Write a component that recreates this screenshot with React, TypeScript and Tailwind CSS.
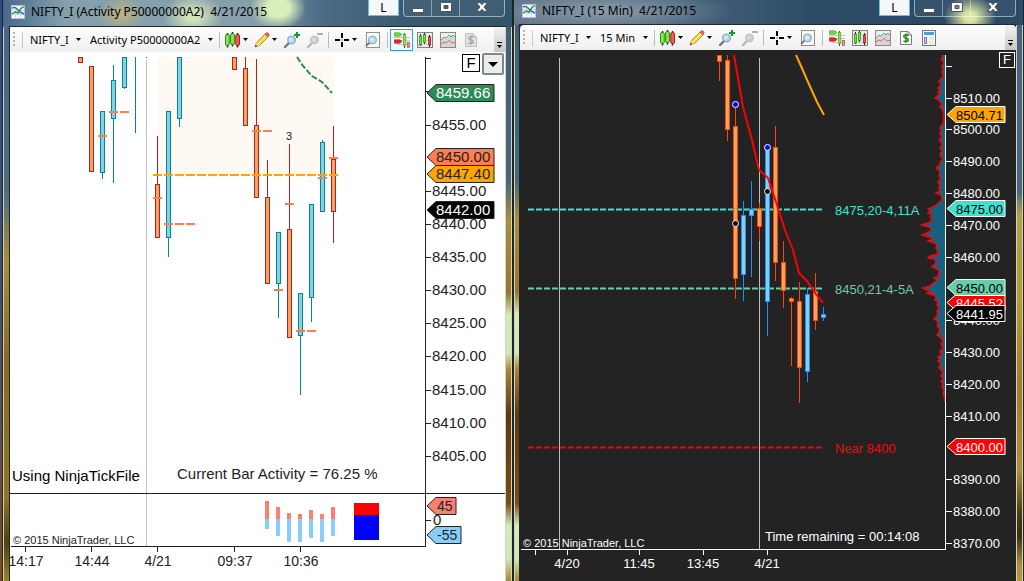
import type { ReactNode } from "react";
import clsx from "clsx";

type Candle = {
  x: number;
  high: number;
  top: number;
  bottom: number;
  low: number;
  up: boolean;
};

type Tag = {
  y: number;
  text: string;
  fill: string;
  color: string;
};

const candle = (x: number, high: number, top: number, bottom: number, low: number, up: boolean): Candle => ({
  x,
  high,
  top,
  bottom,
  low,
  up,
});

const activityCandles: Candle[] = [
  candle(80, 57, 57, 63, 63, false),
  candle(91, 66, 66, 172, 172, false),
  candle(102, 111, 111, 173, 179, true),
  candle(113, 65, 80, 119, 183, true),
  candle(124, 57, 57, 88, 89, true),
  candle(157, 136, 184, 238, 238, false),
  candle(168, 111, 111, 238, 257, true),
  candle(179, 57, 57, 119, 127, true),
  candle(234, 57, 57, 70, 70, false),
  candle(245, 57, 68, 126, 126, false),
  candle(256, 59, 125, 198, 198, false),
  candle(267, 160, 197, 284, 284, false),
  candle(278, 232, 232, 284, 318, true),
  candle(289, 144, 229, 338, 338, false),
  candle(300, 293, 293, 336, 395, true),
  candle(311, 204, 204, 298, 322, true),
  candle(322, 140, 142, 212, 212, true),
  candle(333, 126, 159, 212, 243, false),
];

const minuteCandles: Candle[] = [
  candle(719, 55, 55, 62, 81, false),
  candle(727, 55, 60, 130, 141, false),
  candle(735, 104, 126, 279, 299, false),
  candle(743, 201, 215, 275, 301, true),
  candle(751, 181, 209, 216, 277, true),
  candle(759, 203, 208, 227, 241, false),
  candle(767, 148, 148, 302, 336, true),
  candle(775, 126, 147, 263, 281, false),
  candle(783, 241, 262, 291, 308, false),
  candle(791, 297, 298, 302, 366, false),
  candle(799, 282, 301, 368, 403, false),
  candle(807, 288, 294, 372, 382, true),
  candle(815, 273, 291, 321, 330, false),
  candle(823, 307, 314, 318, 321, true),
];

// Point of control marks, [left, top]
const pocMarks = [
  [98, 135], [109, 111], [120, 111], [153, 197], [164, 223], [175, 223], [186, 223],
  [252, 130], [263, 130], [285, 203], [318, 177], [329, 157], [274, 289], [296, 330], [307, 330],
];

// Buy / sell bars, [left, top, bottom]
const deltaBars = [
  [265, 501, 529], [276, 507, 536], [287, 513, 542], [298, 514, 542],
  [309, 510, 538], [320, 514, 542], [331, 507, 536],
];

// Volume profile outline, [y, left]
const profile = [
  [55, 942], [57, 943], [59, 941], [61, 943], [63, 944], [66, 942], [69, 943], [72, 942], [75, 943],
  [78, 942], [80, 940], [82, 939], [84, 941], [86, 940], [88, 938], [90, 940], [92, 938], [94, 940],
  [96, 937], [98, 935], [100, 939], [102, 940], [104, 942], [107, 940], [109, 942], [112, 943],
  [115, 944], [118, 943], [121, 944], [124, 943], [126, 941], [128, 940], [131, 941], [134, 940],
  [137, 942], [140, 939], [142, 941], [145, 942], [148, 940], [151, 942], [154, 940], [157, 941],
  [159, 943], [161, 941], [164, 940], [167, 938], [168, 936], [170, 939], [173, 940], [176, 939],
  [179, 941], [182, 938], [185, 940], [188, 939], [191, 940], [193, 936], [195, 941], [198, 942],
  [201, 941], [203, 938], [205, 936], [207, 933], [209, 928], [211, 930], [213, 928], [215, 932],
  [217, 930], [219, 932], [221, 931], [223, 928], [225, 922], [227, 929], [229, 931], [231, 930],
  [233, 927], [235, 922], [237, 930], [239, 933], [241, 928], [243, 934], [245, 937], [248, 936],
  [250, 938], [252, 937], [254, 938], [256, 930], [258, 928], [259, 935], [262, 936], [265, 934],
  [267, 932], [269, 937], [272, 940], [274, 938], [276, 939], [278, 934], [280, 937], [282, 935],
  [284, 932], [286, 930], [288, 923], [290, 927], [292, 931], [293, 927], [295, 933], [297, 936],
  [300, 935], [302, 938], [305, 937], [308, 939], [311, 937], [314, 938], [317, 936], [319, 934],
  [321, 937], [324, 938], [326, 937], [329, 940], [332, 939], [335, 937], [338, 941], [341, 943],
  [344, 941], [347, 943], [350, 941], [352, 940], [354, 942], [357, 938], [359, 940], [361, 938],
  [364, 941], [367, 939], [370, 941], [373, 943], [376, 941], [379, 943], [381, 941], [384, 943],
  [387, 942], [390, 944], [393, 943], [396, 944], [402, 945],
];

const profilePath = profile.map(([y, x], i) => `${i === 0 ? "M" : "L"}${x} ${y}`).join("");

function Candles({ data, up, down }: { data: Candle[]; up: string; down: string }) {
  return (
    <g>
      {data.map((c) => (
        <g key={c.x}>
          <rect x={c.x} y={c.high} width={1} height={c.low - c.high} fill={c.up ? up : down} />
          <rect x={c.x - 2} y={c.top} width={5} height={c.bottom - c.top} fill={c.up ? up : down} />
          <rect
            x={c.x - 1}
            y={c.top + 1}
            width={3}
            height={Math.max(c.bottom - c.top - 2, 1)}
            fill={c.up ? "#87ceeb" : "#f4a460"}
          />
        </g>
      ))}
    </g>
  );
}

function PriceTag({ tag, x, width, height, stroke, size, textX }: {
  tag: Tag;
  x: number;
  width: number;
  height: number;
  stroke: string;
  size: number;
  textX: number;
}) {
  const { y, text, fill, color } = tag;
  const mid = y + height / 2;
  return (
    <g>
      <path
        d={`M${x} ${mid}L${x + 9} ${y + 0.5}H${x + width}V${y + height - 0.5}H${x + 9}Z`}
        fill={fill}
        stroke={stroke}
      />
      <text x={textX} y={mid + 5} fontSize={size} fill={color}>{text}</text>
    </g>
  );
}

function ActivityChart() {
  const ticks = [
    [125, "8455.00"], [191, "8445.00"], [224, "8440.00"], [257, "8435.00"], [290, "8430.00"],
    [323, "8425.00"], [356, "8420.00"], [390, "8415.00"], [423, "8410.00"], [456, "8405.00"],
  ] as [number, string][];
  const times = [[25, "14:17"], [91, "14:44"], [157, "4/21"], [234, "09:37"], [300, "10:36"]] as [number, string][];
  const tags: Tag[] = [
    { y: 84, text: "8459.66", fill: "#2e8b57", color: "#ffffff" },
    { y: 148, text: "8450.00", fill: "#ff7f50", color: "#232323" },
    { y: 165, text: "8447.40", fill: "#ffa500", color: "#232323" },
    { y: 201, text: "8442.00", fill: "#000000", color: "#ffffff" },
  ];

  return (
    <svg viewBox="10 52 495 529" className="block w-full bg-white font-['Liberation_Sans',Arial,sans-serif]" role="img" aria-label="NIFTY_I activity chart">
      <g shapeRendering="crispEdges">
        <rect x={157} y={57} width={177} height={118} fill="#fff9f3" />
        <rect x={146} y={60} width={1} height={486} fill="#bfbfbf" />
        <rect x={146} y={57} width={1} height={1} fill="#b22222" />
        <rect x={135} y={57} width={1} height={76} fill="#008b8b" />
        <Candles data={activityCandles} up="#008b8b" down="#b22222" />
        {pocMarks.map(([x, y]) => (
          <rect key={`${x}-${y}`} x={x} y={y} width={9} height={2} fill="#ff7f50" />
        ))}
        <path d="M153 175H338" stroke="#ffa500" strokeWidth={2} strokeDasharray="9 2" />
        {deltaBars.map(([x, top, bottom]) => (
          <g key={x}>
            <rect x={x} y={top} width={4} height={519 - top} fill="#fa8072" />
            <rect x={x} y={519} width={4} height={bottom - 519} fill="#87cefa" />
          </g>
        ))}
        <rect x={354} y={503} width={25} height={12} fill="#ff0000" />
        <rect x={354} y={515} width={25} height={25} fill="#0000ff" />
        <g fill="#232323">
          <rect x={425} y={57} width={1} height={490} />
          <rect x={10} y={493} width={495} height={1} />
          <rect x={11} y={546} width={415} height={1} />
          <rect x={425} y={58} width={6} height={1} />
          <rect x={425} y={91} width={6} height={1} />
          <rect x={425} y={520} width={6} height={1} />
          {ticks.map(([y]) => <rect key={y} x={425} y={y} width={6} height={1} />)}
          {times.map(([x]) => <rect key={x} x={x} y={546} width={1} height={6} />)}
        </g>
      </g>
      <path d="M297 57L303 66L312 76L322 82L332 93" fill="none" stroke="#2e8b57" strokeWidth={2} strokeDasharray="6 2" />
      <text x={289} y={140} fontSize={11} textAnchor="middle" fill="#232323">3</text>
      <g fontSize={15} fill="#232323">
        {ticks.map(([y, label]) => <text key={y} x={432} y={y + 5}>{label}</text>)}
        {times.map(([x, label]) => <text key={x} x={x + 1} y={566} fontSize={14} textAnchor="middle">{label}</text>)}
        <text x={433} y={525}>0</text>
        <text x={12} y={481} fill="#000000">Using NinjaTickFile</text>
        <text x={177} y={479}>Current Bar Activity = 76.25 %</text>
        <text x={13} y={544} fontSize={11}>© 2015 NinjaTrader, LLC</text>
      </g>
      {tags.map((t) => (
        <PriceTag key={t.text} tag={t} x={427} width={67} height={18} stroke="#232323" size={15} textX={436} />
      ))}
      <PriceTag tag={{ y: 497, text: "45", fill: "#fa8072", color: "#232323" }} x={427} width={29} height={18} stroke="#232323" size={14} textX={437} />
      <PriceTag tag={{ y: 526, text: "-55", fill: "#87cefa", color: "#232323" }} x={427} width={34} height={18} stroke="#232323" size={14} textX={437} />
    </svg>
  );
}

function MinuteChart() {
  const ticks = [
    [98, "8510.00"], [129, "8500.00"], [161, "8490.00"], [193, "8480.00"], [225, "8470.00"],
    [257, "8460.00"], [320, "8440.00"], [352, "8430.00"], [384, "8420.00"], [416, "8410.00"],
    [479, "8390.00"], [511, "8380.00"], [543, "8370.00"],
  ] as [number, string][];
  const times = [[535, ""], [567, "4/20"], [639, "11:45"], [703, "13:45"], [767, "4/21"]] as [number, string][];
  const levels = [
    { y: 209, color: "#40e0d0", label: "8475,20-4,11A" },
    { y: 288, color: "#66cdaa", label: "8450,21-4-5A" },
    { y: 447, color: "#e01010", label: "Near 8400" },
  ];
  const tags: Tag[] = [
    { y: 106, text: "8504.71", fill: "#ffa500", color: "#000000" },
    { y: 200, text: "8475.00", fill: "#40e0d0", color: "#000000" },
    { y: 294, text: "8445.52", fill: "#ff0000", color: "#ffffff" },
    { y: 279, text: "8450.00", fill: "#66cdaa", color: "#000000" },
    { y: 305, text: "8441.95", fill: "#000000", color: "#ffffff" },
    { y: 438, text: "8400.00", fill: "#ff0000", color: "#ffffff" },
  ];
  const dots = [[735, 104, "#0000ff"], [767, 147, "#0000ff"], [735, 223, "#000000"], [767, 191, "#000000"]] as [number, number, string][];

  return (
    <svg viewBox="520 50 496 531" className="block w-full bg-[#232323] font-['Liberation_Sans',Arial,sans-serif]" role="img" aria-label="NIFTY_I 15 minute chart">
      <g shapeRendering="crispEdges">
        <rect x={559} y={58} width={1} height={491} fill="#c0c0c0" />
        <rect x={759} y={58} width={1} height={491} fill="#c0c0c0" />
        {levels.map((l) => (
          <g key={l.label} stroke={l.color} strokeDasharray="6 2">
            <path d={`M528 ${l.y + 0.5}H823`} strokeWidth={3} opacity={0.5} />
            <path d={`M528 ${l.y + 0.5}H823`} strokeWidth={1} />
          </g>
        ))}
        <Candles data={minuteCandles} up="#1e90ff" down="#ff4500" />
      </g>
      <path d={`${profilePath}H945V55Z`} fill="#17607f" />
      <path d={profilePath} fill="none" stroke="#ff0000" strokeWidth={1.5} />
      <g fill="#ffffff" shapeRendering="crispEdges">
        <rect x={945} y={55} width={1} height={495} />
        <rect x={521} y={549} width={425} height={1} />
        <rect x={945} y={66} width={7} height={1} />
        {ticks.map(([y]) => <rect key={y} x={945} y={y} width={7} height={1} />)}
        {times.map(([x]) => <rect key={x} x={x} y={549} width={1} height={6} />)}
      </g>
      <g fill="none" strokeWidth={2}>
        <path d="M734 55L743 107L752 140L759 170L768 178L777 205L785 230L793 250L799 273L807 281L815 293L823 303" stroke="#ff0000" />
        <path d="M796 55L801 66L808 82L817 102L824 115" stroke="#ffa500" />
      </g>
      {dots.map(([x, y, fill]) => (
        <circle key={`${x}-${y}`} cx={x + 0.5} cy={y + 0.5} r={3} fill={fill} stroke="#ffffff" />
      ))}
      <g fontSize={13} fill="#ffffff">
        {ticks.map(([y, label]) => <text key={y} x={953} y={y + 5}>{label}</text>)}
        {times.map(([x, label]) => <text key={x} x={x} y={568} textAnchor="middle">{label}</text>)}
        {levels.map((l) => <text key={l.label} x={835} y={l.y + 6} fill={l.color}>{l.label}</text>)}
        <text x={765} y={541}>Time remaining = 00:14:08</text>
        <text x={523} y={547} fontSize={11}>© 2015 NinjaTrader, LLC</text>
      </g>
      {tags.map((t) => (
        <PriceTag key={t.text} tag={t} x={947} width={58} height={17} stroke="#ffffff" size={13} textX={956} />
      ))}
    </svg>
  );
}

function Caret() {
  return (
    <svg viewBox="0 0 5 3" className="h-[3px] w-[5px] shrink-0" aria-hidden="true">
      <path d="M0 0H5L2.5 3Z" fill="#000" />
    </svg>
  );
}

function Icon({ children }: { children: ReactNode }) {
  return (
    <svg viewBox="0 0 16 16" className="size-4 shrink-0" aria-hidden="true">{children}</svg>
  );
}

function AppIcon() {
  return (
    <svg viewBox="0 0 14 14" className="h-3.5 w-3.5 shrink-0" aria-hidden="true">
      <rect x="0.5" y="0.5" width="13" height="13" fill="#f7f8fd" stroke="#b9bfd6" />
      <path d="M4.5 1V13M9.5 1V13M1 5.5H13M1 9.5H13" stroke="#d3d6ec" />
      <path d="M1 3Q4 1.500 6 4T9 7T13 9" fill="none" stroke="#2f6fd0" strokeWidth="1.500" />
      <path d="M1 9L4 7L7 8L10 3.500L13 1.500" fill="none" stroke="#1f9a2e" strokeWidth="1.500" />
    </svg>
  );
}

function CandlesIcon() {
  return (
    <Icon>
      <path d="M2.5 1V15.500M7.500 0V14.500M12.500 1V15.500" stroke="#222" strokeWidth="1.500" />
      <rect x="0.500" y="2.500" width="3.800" height="11" rx="1.500" fill="#7dee4e" stroke="#2f7a15" strokeWidth="0.900" />
      <rect x="5.600" y="1.500" width="3.800" height="11" rx="1.500" fill="#7dee4e" stroke="#2f7a15" strokeWidth="0.900" />
      <rect x="10.700" y="2.500" width="3.800" height="11" rx="1.500" fill="#fb5a50" stroke="#951a15" strokeWidth="0.900" />
    </Icon>
  );
}

function PencilIcon() {
  return (
    <Icon>
      <path d="M1 15L2.500 10.500L11 2L14 5L5.500 13.500Z" fill="#ffd93b" stroke="#a8790c" strokeWidth="0.800" />
      <path d="M4 12L12.500 3.500" stroke="#fff3a0" />
      <path d="M11 2L12.500 0.700Q14 0.500 15 2Q15.500 3 14 5Z" fill="#f06a5c" stroke="#a53a30" strokeWidth="0.600" />
      <path d="M1 15L2.500 10.500L5.500 13.500Z" fill="#f3d3a3" />
      <path d="M1 15L1.800 12.800L3.200 14.200Z" fill="#222" />
    </Icon>
  );
}

function ZoomIcon({ plus = false }: { plus?: boolean }) {
  return (
    <Icon>
      <path d="M1 15L5 11" stroke={plus ? "#6f7580" : "#b5b5b5"} strokeWidth="2.400" strokeLinecap="round" />
      <circle cx="7.500" cy="8" r="4" fill={plus ? "#a8d4f2" : "#cccccc"} stroke={plus ? "#8f9fae" : "#c2c2c2"} />
      <circle cx="7" cy="7.500" r="2" fill={plus ? "#d0e9fa" : "#dadada"} />
      {plus ? (
        <path d="M13 0V6M10 3H16" stroke="#0aa02c" strokeWidth="2" />
      ) : (
        <path d="M10 2H16" stroke="#b0b0b0" strokeWidth="2" />
      )}
    </Icon>
  );
}

function CrosshairIcon() {
  return (
    <Icon>
      <path d="M8 1V6M8 10V15M1 8H6M10 8H15" stroke="#000" strokeWidth="2" />
      <path d="M7.500 8H8.500" stroke="#000" />
    </Icon>
  );
}

function PageZoomIcon() {
  return (
    <Icon>
      <rect x="2.500" y="0.500" width="13" height="15" fill="#fafafa" stroke="#8f8f8f" />
      <path d="M2 14L5.500 10.500" stroke="#777" strokeWidth="2" />
      <circle cx="8.500" cy="8" r="4" fill="#b6d9f3" stroke="#8aa2b8" />
      <circle cx="8" cy="7.500" r="2" fill="#d8ecfb" />
    </Icon>
  );
}

function TraderIcon() {
  return (
    <Icon>
      <path d="M0 5.500H16M0 8.500H16M3 12.500H16" stroke="#c4c4c4" />
      <path d="M0.500 0.800H5.500L8 2.500L5.500 4.200H0.500Z" fill="#5ce82a" stroke="#3b9a1a" strokeWidth="0.600" />
      <path d="M0.500 7.800H5.500L8 9.500L5.500 11.200H0.500Z" fill="#f0261d" stroke="#a01410" strokeWidth="0.600" />
      <path d="M10.500 1V16" stroke="#444" />
      <rect x="9.400" y="2.500" width="2.400" height="11" fill="#77ee45" stroke="#4f9c2c" strokeWidth="0.600" />
      <rect x="13.400" y="10.500" width="2.200" height="5" fill="#f8918b" stroke="#b33a33" strokeWidth="0.600" />
    </Icon>
  );
}

function FramedCandlesIcon() {
  return (
    <Icon>
      <rect x="0.500" y="0.500" width="15" height="15" fill="#ececec" stroke="#808080" />
      <path d="M1 4.500H15M1 8.500H15M1 12.500H15" stroke="#cfcfcf" />
      <path d="M3.500 2V14M7.500 1V12M12.500 3V15" stroke="#222" />
      <rect x="2.300" y="4" width="2.400" height="9" fill="#66e632" stroke="#2f7a15" strokeWidth="0.600" />
      <rect x="6.300" y="2.500" width="2.400" height="8" fill="#66e632" stroke="#2f7a15" strokeWidth="0.600" />
      <rect x="11.300" y="5" width="2.400" height="8" fill="#f4463d" stroke="#8c1511" strokeWidth="0.600" />
    </Icon>
  );
}

function IndicatorIcon() {
  return (
    <Icon>
      <rect x="0.500" y="0.500" width="15" height="15" fill="#d6d6d6" stroke="#8a8a8a" />
      <path d="M1 1H15V4L12 3L9 4L6 6L4 5L1 8Z" fill="#f0f0f0" />
      <path d="M1 8L4 5L6 6L9 3L11 5L13 3L15 5" fill="none" stroke="#4fae7d" />
      <path d="M1 12L4 10L6 11L9 8.500L12 11L15 10.500" fill="none" stroke="#e0645c" />
    </Icon>
  );
}

function StrategyIcon({ active = false }: { active?: boolean }) {
  return (
    <Icon>
      <path d="M2.500 1.500H10L13.500 5V14.500H2.500Z" fill={active ? "#ffffff" : "#e2e2e2"} stroke={active ? "#7c7c7c" : "#c0c0c0"} />
      <path d="M10 1.500V5H13.500" fill="none" stroke={active ? "#7c7c7c" : "#c0c0c0"} />
      <path
        d="M10.500 5.500Q8 4 6 5.500Q5 7.500 8 8Q11 8.500 10 10.800Q8 12.300 5.500 10.800M8 3.500V12.800"
        fill="none"
        stroke={active ? "#1d8a1d" : "#aaaaaa"}
        strokeWidth="1.500"
      />
    </Icon>
  );
}

function PanelIcon() {
  return (
    <Icon>
      <rect x="1.500" y="0.500" width="13" height="15" fill="#f8f8f8" stroke="#777" />
      <rect x="3" y="2" width="10" height="3" fill="#4b9fd8" />
      <rect x="3.500" y="7.500" width="2" height="6" fill="#cfc0ff" stroke="#8b6fe0" />
      <path d="M8 7.500H13M8 9.500H13M8 11.500H13M8 13.500H13" stroke="#dddddd" />
    </Icon>
  );
}

function ToolButton({ label, caret = false, selected = false, children }: {
  label: string;
  caret?: boolean;
  selected?: boolean;
  children: ReactNode;
}) {
  return (
    <button
      type="button"
      aria-label={label}
      className={clsx(
        "flex h-[22px] shrink-0 items-center",
        caret ? "w-[29px] gap-0.5 pl-[3px]" : "w-[23px] justify-center",
        selected && "border border-[#3399ff] bg-[#f3f8fd]",
      )}
    >
      {children}
      {caret && <Caret />}
    </button>
  );
}

function ToolSelect({ label, value, className }: { label: string; value: string; className: string }) {
  return (
    <div className={clsx("flex shrink-0 items-center justify-between", className)}>
      <select
        aria-label={label}
        defaultValue={value}
        className="h-6 min-w-0 flex-1 appearance-none bg-transparent p-0 text-[11px] leading-6 text-black outline-none"
      >
        <option>{value}</option>
      </select>
      <Caret />
    </div>
  );
}

function Separator() {
  return <span className="mx-0.5 h-4 w-px shrink-0 bg-[#bdbdbd]" />;
}

function Toolbar({ interval, wide = false }: { interval: string; wide?: boolean }) {
  return (
    <div className="flex h-[25px] items-center overflow-hidden rounded-t-sm bg-linear-to-b from-[#fdfdfd] to-[#f0f0f0] pl-[3px]">
      <span className="h-4 w-0.5 shrink-0 bg-[repeating-linear-gradient(to_bottom,#b5b5b5_0px,#b5b5b5_2px,transparent_2px,transparent_4px)]" />
      <span className="ml-[7px] h-4 w-px shrink-0 bg-[#c9c9c9]" />
      <ToolSelect label="Instrument" value="NIFTY_I" className="ml-[7px] w-[51px]" />
      <ToolSelect label="Interval" value={interval} className={clsx("mr-1 ml-[9px]", wide ? "w-[123px]" : "w-[48px]")} />
      <Separator />
      <ToolButton label="Chart style" caret><CandlesIcon /></ToolButton>
      <ToolButton label="Drawing tools" caret><PencilIcon /></ToolButton>
      <ToolButton label="Zoom in"><ZoomIcon plus /></ToolButton>
      <ToolButton label="Zoom out"><ZoomIcon /></ToolButton>
      <Separator />
      <ToolButton label="Cursor" caret><CrosshairIcon /></ToolButton>
      <ToolButton label="Data box"><PageZoomIcon /></ToolButton>
      <span className="mr-0.5 ml-1 h-4 w-px shrink-0 bg-[#bdbdbd]" />
      <ToolButton label="Chart trader" selected={wide}><TraderIcon /></ToolButton>
      <ToolButton label="Data series"><FramedCandlesIcon /></ToolButton>
      <ToolButton label="Indicators"><IndicatorIcon /></ToolButton>
      <ToolButton label="Strategies"><StrategyIcon active={!wide} /></ToolButton>
      {!wide && <ToolButton label="Properties"><PanelIcon /></ToolButton>}
      <button type="button" aria-label="Toolbar options" className="ml-auto flex h-full w-[11px] shrink-0 items-end justify-center rounded-tr-sm bg-linear-to-b from-[#f4f4f4] to-[#c6c6c6] pb-1">
        <svg viewBox="0 0 5 6" className="h-1.5 w-[5px]" aria-hidden="true">
          <path d="M0 0H5V1H0ZM0 3H5L2.500 6Z" fill="#000" />
        </svg>
      </button>
    </div>
  );
}

function WindowControls() {
  return (
    <div className="flex items-start">
      <button type="button" className="mr-1 h-4 w-[31px] border border-t-0 border-[#5cc3ee] bg-[#f7f7f9] text-[12px] leading-[14px] text-black">
        L
      </button>
      <div className="flex h-[17px] divide-x divide-white/40 rounded-b-sm border border-t-0 border-white/50 bg-white/5">
        <button type="button" aria-label="Minimize" className="flex w-7 items-center justify-center">
          <svg viewBox="0 0 12 10" className="h-2.5 w-3"><rect x="0.500" y="5.500" width="11" height="4" rx="0.500" fill="#fff" stroke="#4b5560" /></svg>
        </button>
        <button type="button" aria-label="Maximize" className="flex w-7 items-start justify-center pt-0.5">
          <svg viewBox="0 0 12 10" className="h-2.5 w-3"><path d="M0.500 0.500H11.500V9.500H0.500ZM4 3.500V6.500H8V3.500Z" fill="#fff" fillRule="evenodd" stroke="#4b5560" /></svg>
        </button>
        <button type="button" aria-label="Close" className="flex w-11 items-start justify-center pt-0.5">
          <svg viewBox="0 0 12 10" className="h-2.5 w-3"><path d="M0.500 0.500H4L6 2.800L8 0.500H11.500L8 5L11.500 9.500H8L6 7.200L4 9.500H0.500L4 5Z" fill="#fff" stroke="#4b5560" /></svg>
        </button>
      </div>
    </div>
  );
}

function ChartWindow({ title, frame, leftEdge, rightEdge, header, children }: {
  title: string;
  frame: string;
  leftEdge: string;
  rightEdge: string;
  header: string;
  children: ReactNode;
}) {
  return (
    <section className={clsx("flex min-w-0 flex-col overflow-hidden border-x border-[#1f2426]", frame)}>
      <header className={clsx("flex items-start justify-between px-[7px]", header)}>
        <div className="flex h-full items-center gap-1.5 pb-[3px] pl-px">
          <AppIcon />
          <h2 className="text-[12px] whitespace-pre text-black">{title}</h2>
        </div>
        <WindowControls />
      </header>
      <div className="flex flex-1">
        <div className={clsx("shrink-0 border-x border-[#d5d2bd]", leftEdge)} />
        <div className="min-w-0 flex-1 shadow-[0_0_0_1px_#20262b]">{children}</div>
        <div className={clsx("w-[7px] shrink-0 border-x border-[#d5d2bd]", rightEdge)} />
      </div>
    </section>
  );
}

export default function App() {
  return (
    <main className="grid min-h-screen grid-cols-2 overflow-hidden bg-linear-to-b from-[#2b4c8c] via-[#40506a] to-[#7a4a20] pl-0.5 font-['Noto_Sans','Open_Sans',sans-serif]">
      <ChartWindow
        title="NIFTY_I (Activity P50000000A2)  4/21/2015"
        frame="bg-white"
        leftEdge="w-[7px] bg-[linear-gradient(to_bottom,#45698c_0%,#4f6f80_30%,#a5903c_42%,#8a6a22_60%,#8f7524_85%,#4c4413_93%,#9a8228_100%)]"
        rightEdge="bg-[linear-gradient(to_bottom,#3f5f75_0%,#46697a_28%,#a8903c_35%,#96762b_48%,#d3edb8_52%,#cfe8b4_59%,#a5842f_62%,#5a3a12_70%,#7a4c16_86%,#d3edb8_90%,#cfe8b4_96%,#a58a34_100%)]"
        header="h-[27px] bg-[radial-gradient(ellipse_28px_22px_at_275px_8px,#d9eebb_40%,transparent_100%),radial-gradient(ellipse_30px_22px_at_190px_16px,#d4e2bb_20%,transparent_100%),radial-gradient(ellipse_24px_18px_at_118px_14px,#c4b27c_0%,transparent_100%),linear-gradient(to_right,#48698a_0%,#84a0ad_12%,#86a0aa_50%,#4d6c86_62%,#38596f_80%,#33556a_100%)]"
      >
        <Toolbar interval="Activity P50000000A2" wide />
        <div className="relative">
          <ActivityChart />
          <div className="absolute top-px right-px flex gap-0.5">
            <button type="button" className="mt-px h-[18px] w-[18px] border border-black bg-white font-['Liberation_Sans',Arial,sans-serif] text-[15px] leading-4 text-black">F</button>
            <button type="button" aria-label="Show panel" className="flex size-[22px] items-center justify-center rounded-xs border-2 border-[#7d8796] bg-[#ececec]">
              <svg viewBox="0 0 10 5" className="h-[5px] w-2.5"><path d="M0 0H10L5 5Z" fill="#000" /></svg>
            </button>
          </div>
        </div>
      </ChartWindow>
      <ChartWindow
        title="NIFTY_I (15 Min)  4/21/2015"
        frame="bg-[#232323]"
        leftEdge="w-[6px] bg-[linear-gradient(to_bottom,#3f5f75_0%,#46697a_28%,#a8903c_35%,#96762b_48%,#d3edb8_52%,#cfe8b4_59%,#a5842f_62%,#5a3a12_70%,#7a4c16_86%,#d3edb8_90%,#cfe8b4_96%,#a58a34_100%)]"
        rightEdge="bg-[linear-gradient(to_bottom,#4a6280_0%,#466a80_30%,#b3a045_34%,#b59a38_50%,#a57c28_65%,#b09038_80%,#4a3a12_88%,#3a3010_92%,#b09038_97%,#b8983c_100%)]"
        header="h-[25px] bg-[radial-gradient(ellipse_26px_22px_at_456px_17px,#dbe8a0_20%,transparent_100%),radial-gradient(ellipse_130px_22px_at_90px_11px,#8b9dab_0%,transparent_100%),linear-gradient(to_right,#5d7286_0%,#4a647c_30%,#2c4a66_60%,#2b4a68_100%)]"
      >
        <Toolbar interval="15 Min" />
        <div className="relative">
          <MinuteChart />
          <button type="button" className="absolute top-0.5 right-px h-4 w-4 border border-white bg-[#232323] font-['Liberation_Sans',Arial,sans-serif] text-[13px] leading-3.5 text-white">F</button>
        </div>
      </ChartWindow>
    </main>
  );
}
